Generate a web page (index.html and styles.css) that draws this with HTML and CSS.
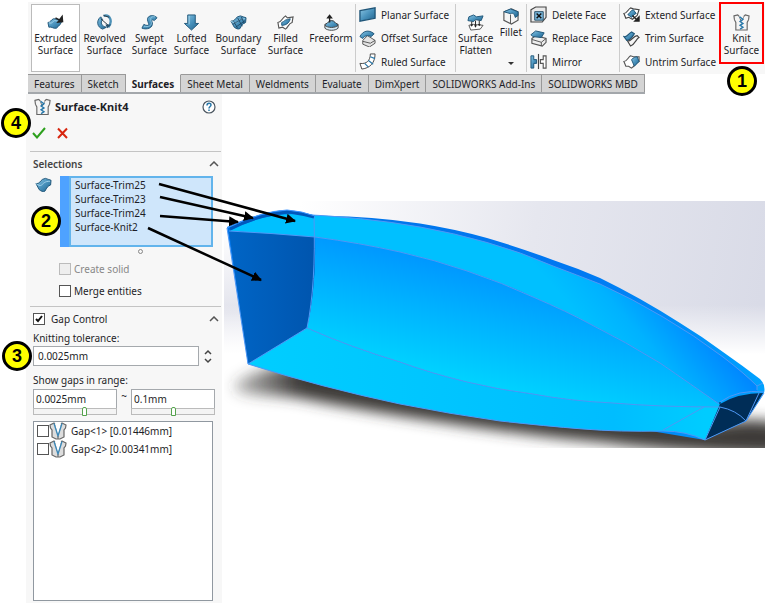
FILE: index.html
```html
<!DOCTYPE html>
<html lang="en">
<head>
<meta charset="utf-8">
<title>Surface-Knit4</title>
<link rel="stylesheet" href="styles.css">
</head>
<body>
<svg class="defs" aria-hidden="true">
  <defs>
    <linearGradient id="steel" x1="0" y1="0" x2="1" y2="1">
      <stop offset="0" stop-color="#8cc6e4"/><stop offset=".5" stop-color="#4a93bd"/><stop offset="1" stop-color="#20628c"/>
    </linearGradient>
    <symbol id="knit" viewBox="0 0 18 18">
      <path d="M1 2l4-1 2 2 1 3 1 1 1-1 1-3 2-2 4 1-.500 4-1.500 3v8H3V9L1.500 6z" fill="#f4f4f4" stroke="#666" stroke-width="1.200"/>
      <path d="M6.500 2.500L9 7l2.500-4.500z" fill="#f7f7f7"/>
      <path d="M7 3l3.500 2.500L7.500 8l3 2-3 2 3 2-3 2" fill="none" stroke="#2878aa" stroke-width="1.500"/>
    </symbol>
    <symbol id="gap" viewBox="0 0 18 18">
      <path d="M1 3l4-2 2 3 2 9 2-9 2-3 4 2-.500 3L15 8v7l-4 2H7l-4-2V8L1.500 6z" fill="#ddd" stroke="#666" stroke-width="1.200"/>
      <path d="M6 2l3 12 3-12z" fill="#fff"/><path d="M5 1.500L9 14l4-12.500" fill="none" stroke="#3c88b8" stroke-width="1.300"/>
      <path d="M9 14v3" stroke="#666"/>
    </symbol>
    <symbol id="sheet" viewBox="0 0 18 18">
      <path d="M1 7.500C5 8 5 5 8 3l3-1c2 1 4 1 6 2l-.500 5c-3 1-4 3-6 6.500-2 1-4 0-6-1.500z" fill="url(#steel)" stroke="#1f5578"/>
      <path d="M1 7.500c3 1.500 4 3 6 1.500s3-4 9-4" fill="none" stroke="#a6d5eb"/>
    </symbol>
  </defs>
</svg>

<div class="app">
  <header>
    <div class="ribbon" role="toolbar" aria-label="Surfaces">
      <div class="group create">
        <button class="big active">
          <svg viewBox="0 0 18 18"><path d="M1 9c3 0 3-3 6-4l9 1c-1 5-3 6-6 9-3 1-5-2-8-1z" fill="url(#steel)" stroke="#1f5578"/><path d="M2 9c3 2 4-1 6-2l7 1" fill="none" stroke="#a6d5eb"/><path d="M9 4l5 3M16 2.500L16.500 8l-5 .500z" stroke="#222" stroke-width="1.500" fill="#222"/></svg>
          <span>Extruded<br>Surface</span></button>
        <button class="big">
          <svg viewBox="0 0 18 18"><path d="M5 3C0 7 1 14 7 16l4-2C6 13 4 9 7 6z" fill="url(#steel)" stroke="#1f5578"/><path d="M8 2c7-2 10 6 5 12" fill="none" stroke="#4c91b7" stroke-width="2.500"/><path d="M5 5l8 7M8 1.500l6 2" stroke="#27333d"/><path d="M10 11l6 0-4 4z" fill="#27506c"/></svg>
          <span>Revolved<br>Surface</span></button>
        <button class="big">
          <svg viewBox="0 0 18 18"><path d="M8 3c4-3 8 0 9 1l-3 3c-3-2-3 0-2 2 1 6-6 8-11 6l2-4c4 2 6 1 5-1-1-3-2-5 0-7z" fill="url(#steel)" stroke="#1f5578"/><path d="M15 3c-6-1-5 3-4 6 0 4-3 5-8 4" fill="none" stroke="#8fc6df"/></svg>
          <span>Swept<br>Surface</span></button>
        <button class="big">
          <svg viewBox="0 0 18 18"><path d="M5 1h8v9h3.500L9 17l-7.500-7H5z" fill="url(#steel)" stroke="#1f5578"/><path d="M6.500 2v9" stroke="#a6d5eb"/></svg>
          <span>Lofted<br>Surface</span></button>
        <button class="big">
          <svg viewBox="0 0 18 18"><use href="#sheet"/><path d="M4 8l4 7M8 4l5 9M12 3l3 7M3 11l10-6M6 14l10-7" stroke="#173f5c" fill="none" stroke-width=".8"/></svg>
          <span>Boundary<br>Surface</span></button>
        <button class="big">
          <svg viewBox="0 0 18 18"><path d="M1 9c4 0 4-5 8-7l2 2 6-1-1 6c-4 1-4 5-7 7l-3-2-4 1z" fill="#fff" stroke="#555" stroke-width="1.200"/><path d="M5 9c3-1 3-3 6-3l3-1c-1 5-5 7-9 7z" fill="url(#steel)" stroke="#1f5578"/></svg>
          <span>Filled<br>Surface</span></button>
        <button class="big">
          <svg viewBox="0 0 18 18"><path d="M2 11c4-1 3-4 7-4s3 3 7 4c0 7-14 7-14 0z" fill="url(#steel)" stroke="#333"/><path d="M2 12c3 3 11 3 14 0v3c-3 3-11 3-14 0z" fill="#d6eaf4" stroke="#444"/><path d="M7 9V3M5 4l2-2.500L9 4z" stroke="#222" stroke-width="1.400" fill="#222"/></svg>
          <span>Freeform</span></button>
      </div>
      <div class="group list">
        <button class="row"><svg viewBox="0 0 18 18"><path d="M1 5l16-3v11L1 16z" fill="url(#steel)" stroke="#1f5578" stroke-width="1.400"/></svg>Planar Surface</button>
        <button class="row"><svg viewBox="0 0 18 18"><path d="M4 11l5-5 8 5v3l-6 4-7-3z" fill="#e4e4e4" stroke="#555"/><path d="M4 12l8 2 5-3" fill="none" stroke="#555"/><path d="M1 7c3-6 9-8 15-3l-3 3C9 5 6 6 4 9z" fill="url(#steel)" stroke="#1f5578"/></svg>Offset Surface</button>
        <button class="row"><svg viewBox="0 0 18 18"><path d="M12 1h5c0 9-5 15-14 16L1 11c7 1 11-3 11-10z" fill="#fff" stroke="#444"/><path d="M12 4l5 2M10 8l5 4M6 11l4 4" stroke="#2878aa" fill="none" stroke-width="1.300"/></svg>Ruled Surface</button>
      </div>
      <div class="group shape">
        <button class="big">
          <svg viewBox="0 0 18 18"><path d="M2 12l5-1 10 1-3 4-10 1z" fill="#fff" stroke="#555"/><path d="M2 3l5-2 3 2 7-1-2 5-6-1-2 2-6-1z" fill="url(#steel)" stroke="#1f5578"/><path d="M5 8v4m4-5v6m4-6v4" stroke="#222"/><path d="M3.500 11l1.500 2.500L6.500 11zM7.500 12L9 14.500l1.500-2.500zM11.500 10.500l1.500 2.500 1.500-2.500z" fill="#222"/></svg>
          <span>Surface<br>Flatten</span></button>
        <button class="big fillet">
          <svg viewBox="0 0 18 18"><path d="M2 4l8-3 7 3v9l-7 4-8-4z" fill="#f5f5f5" stroke="#555" stroke-width="1.200"/><path d="M2 4l7-3 8 3v4l-3 2c-1-4-2-5-5-4z" fill="url(#steel)" stroke="#1f5578"/><path d="M9 7v9" stroke="#555"/></svg>
          <span>Fillet</span><i class="caret"></i></button>
      </div>
      <div class="group list faces">
        <button class="row"><svg viewBox="0 0 18 18"><path d="M1 4l5-3h11v11l-4 5H1z" fill="#e9e9e9" stroke="#444" stroke-width="1.200"/><path d="M5 6h9v9H5z" fill="#7dbbe0" stroke="#234a63"/><path d="M7 8l5 5m0-5l-5 5" stroke="#111" stroke-width="1.600"/></svg>Delete Face</button>
        <button class="row"><svg viewBox="0 0 18 18"><path d="M2 9l4-3 11 3v4l-4 4-11-3z" fill="#eee" stroke="#555" stroke-width="1.200"/><path d="M2 10l10 3 5-4m-5 4v4" fill="none" stroke="#555"/><path d="M1 5l5-4 9 2-3 5-9-1z" fill="url(#steel)" stroke="#1f5578"/></svg>Replace Face</button>
        <button class="row"><svg viewBox="0 0 18 18"><path d="M1 3h3v4h3v4H4v5H1z" fill="url(#steel)" stroke="#1f5578"/><path d="M9 1v16" stroke="#444" stroke-width="1.200"/><path d="M17 3h-3v4h-3v4h3v5h3z" fill="#fff" stroke="#555" stroke-width="1.200"/></svg>Mirror</button>
      </div>
      <div class="group list edit">
        <button class="row"><svg viewBox="0 0 18 18"><path d="M1 8c3 0 4-4 7-6l3 1 6 1-2 6-5 4-4-2-3 1z" fill="#fff" stroke="#444" stroke-width="1.200"/><path d="M5 9c2 0 3-5 6-5l3 4c-2 0-3 3-5 4z" fill="url(#steel)" stroke="#1f5578"/><path d="M10 10l4 4m-1.500 2H17v-4.500z" fill="#222" stroke="#222" stroke-width="1.400"/></svg>Extend Surface</button>
        <button class="row"><svg viewBox="0 0 18 18"><path d="M1 7c4 1 4-3 8-5l3 2c-2 3-4 7-8 7z" fill="url(#steel)" stroke="#1f5578" stroke-width="1.200"/><path d="M5 12c4 0 6-6 10-6l2 2c-3 1-4 7-9 9z" fill="#f5f5f5" stroke="#444" stroke-width="1.200"/></svg>Trim Surface</button>
        <button class="row"><svg viewBox="0 0 18 18"><path d="M1 9c3 0 4-4 7-6l3 1 6 0v5c-4 1-4 5-8 7l-3-2-3 0z" fill="#fff" stroke="#555" stroke-width="1.200"/><path d="M9 7c2-2 4-3 6-3l2 5-5 5z" fill="url(#steel)" stroke="#1f5578"/></svg>Untrim Surface</button>
      </div>
      <button class="big knit"><svg viewBox="0 0 18 18"><use href="#knit"/></svg><span>Knit<br>Surface</span></button>
    </div>
    <nav class="tabs">
      <button>Features</button><button>Sketch</button><button class="current">Surfaces</button><button>Sheet Metal</button><button>Weldments</button><button>Evaluate</button><button>DimXpert</button><button>SOLIDWORKS Add-Ins</button><button>SOLIDWORKS MBD</button>
    </nav>
  </header>

  <main>
    <aside class="panel">
      <div class="title">
        <svg class="icon" viewBox="0 0 18 18"><use href="#knit"/></svg>
        <h1>Surface-Knit4</h1>
        <button class="help" aria-label="Help"><svg viewBox="0 0 14 14"><circle cx="7" cy="7" r="6" fill="#fff" stroke="#4b5660" stroke-width="1.200"/><path d="M5 5.500c0-3 4-3 4-.500C9 6.500 7 6.500 7 8.500M7 9.500V11" fill="none" stroke="#2878aa" stroke-width="1.500"/></svg></button>
      </div>
      <div class="confirm">
        <button aria-label="OK"><svg viewBox="0 0 14 12"><path d="M1 6l4 4.500L13 1" fill="none" stroke="#2da01d" stroke-width="2"/></svg></button>
        <button aria-label="Cancel"><svg viewBox="0 0 14 12"><path d="M2 1.500l9 9.500m0-9.500L2 11" fill="none" stroke="#d8260f" stroke-width="2"/></svg></button>
      </div>

      <section class="selections">
        <div class="head"><h2>Selections</h2><button class="fold" aria-label="Collapse Selections"><svg viewBox="0 0 10 6"><path d="M1 5l4-4 4 4" fill="none" stroke="#555" stroke-width="1.500"/></svg></button></div>
        <div class="pick">
          <svg class="icon" viewBox="0 0 18 18"><use href="#sheet"/></svg>
          <ul><li>Surface-Trim25</li><li>Surface-Trim23</li><li>Surface-Trim24</li><li>Surface-Knit2</li></ul>
        </div>
        <i class="grip"></i>
        <label class="check off"><input type="checkbox" disabled>Create solid</label>
        <label class="check"><input type="checkbox">Merge entities</label>
      </section>

      <section class="gaps">
        <div class="head"><label class="toggle"><input type="checkbox" checked>Gap Control</label><button class="fold" aria-label="Collapse Gap Control"><svg viewBox="0 0 10 6"><path d="M1 5l4-4 4 4" fill="none" stroke="#555" stroke-width="1.500"/></svg></button></div>
        <label class="caption" for="tol">Knitting tolerance:</label>
        <div class="tolerance">
          <input id="tol" type="text" value="0.0025mm">
          <div class="spin">
            <button aria-label="Increase"><svg viewBox="0 0 10 6"><path d="M2 5l3-3 3 3" fill="none" stroke="#444" stroke-width="1.500"/></svg></button>
            <button aria-label="Decrease"><svg viewBox="0 0 10 6"><path d="M2 1l3 3 3-3" fill="none" stroke="#444" stroke-width="1.500"/></svg></button>
          </div>
        </div>
        <label class="caption" for="low">Show gaps in range:</label>
        <div class="range">
          <div class="limit"><input id="low" type="text" value="0.0025mm"><input type="range" min="0" max="100" value="62" aria-label="Lower limit"></div>
          <span>~</span>
          <div class="limit"><input type="text" value="0.1mm" aria-label="Upper limit"><input type="range" min="0" max="100" value="50" aria-label="Upper limit slider"></div>
        </div>
        <div class="results">
          <label><input type="checkbox"><svg viewBox="0 0 18 18"><use href="#gap"/></svg><span>Gap&lt;1&gt; [0.01446mm]</span></label>
          <label><input type="checkbox"><svg viewBox="0 0 18 18"><use href="#gap"/></svg><span>Gap&lt;2&gt; [0.00341mm]</span></label>
        </div>
      </section>
    </aside>

    <svg class="view" viewBox="224 201 541 247" role="img" aria-label="Hull surface model">
      <defs>
        <linearGradient id="sky" x1="300" y1="200" x2="765" y2="280" gradientUnits="userSpaceOnUse"><stop offset="0" stop-color="#fff"/><stop offset=".5" stop-color="#e6e7ef"/><stop offset="1" stop-color="#d9dbe7"/></linearGradient>
        <linearGradient id="haze" x1="0" y1="0" x2="0" y2="1"><stop offset=".42" stop-color="#fff" stop-opacity="0"/><stop offset=".62" stop-color="#fff"/></linearGradient>
        <linearGradient id="mist" x1="0" y1="0" x2="0" y2="1"><stop offset="0" stop-color="#e2e3ec" stop-opacity="0"/><stop offset=".5" stop-color="#e2e3ec"/><stop offset="1" stop-color="#fff"/></linearGradient>
        <linearGradient id="side" x1="460" y1="245" x2="430" y2="372" gradientUnits="userSpaceOnUse"><stop offset="0" stop-color="#008cff"/><stop offset=".5" stop-color="#00b0ff"/><stop offset="1" stop-color="#00d2ff"/></linearGradient>
        <linearGradient id="deck" x1="600" y1="340" x2="664" y2="284" gradientUnits="userSpaceOnUse"><stop offset="0" stop-color="#00c0ff"/><stop offset=".4" stop-color="#00b2ff"/><stop offset="1" stop-color="#0088ff"/></linearGradient>
        <linearGradient id="keel" x1="248" y1="0" x2="705" y2="0" gradientUnits="userSpaceOnUse"><stop offset="0" stop-color="#00ceff"/><stop offset=".8" stop-color="#00bdff"/><stop offset="1" stop-color="#00ccff"/></linearGradient>
        <linearGradient id="rim" x1="300" y1="0" x2="765" y2="0" gradientUnits="userSpaceOnUse"><stop offset="0" stop-color="#0075ea"/><stop offset=".6" stop-color="#0078f2"/><stop offset="1" stop-color="#00a2ff"/></linearGradient>
        <linearGradient id="stern" x1="0" y1="0" x2="1" y2="0"><stop offset="0" stop-color="#0065c6"/><stop offset="1" stop-color="#0055ae"/></linearGradient>
        <linearGradient id="dusk" x1="232" y1="0" x2="300" y2="0" gradientUnits="userSpaceOnUse"><stop offset="0" stop-color="#3c3a38" stop-opacity=".3"/><stop offset="1" stop-color="#3c3a38"/></linearGradient>
        <filter id="soft" x="-10%" y="-30%" width="120%" height="160%"><feGaussianBlur stdDeviation="7"/></filter>
      </defs>
      <rect x="224" y="201" width="541" height="247" fill="url(#sky)"/>
      <rect x="224" y="230" width="60" height="165" fill="url(#mist)"/>
      <rect x="224" y="201" width="541" height="247" fill="url(#haze)"/>
      <path d="M236 382C290 350 340 372 420 380S620 414 700 425C730 424 745 414 790 426V455C730 454 660 450 610 443C500 433 370 412 300 398C265 393 225 398 236 382z" fill="url(#dusk)" filter="url(#soft)"/>
      <path d="M227 227Q262 211 287 210Q302 211 315 216Q365 215 420 223.500Q455 229 487 238Q521 248 553 260Q577 268 600 278Q641 298 680 323Q703 337 723 352Q743 366 760 379Q766 385 764 393L746 421L705 440L248 364z" fill="url(#rim)"/>
      <path d="M230 231Q260 214 294 214Q364 217 420 227Q454 233 487 242.500Q521 252 553 266Q577 275 600 284Q633 299 663 317Q694 335 723 357Q744 373 757 386L757 391Q738 392 720 404Q692 385 660 363Q626 342 590 324Q568 312 533 297Q503 283 467 271Q435 260 400 252Q360 243 315 237Z" fill="url(#deck)"/>
      <path d="M315 237Q360 243 400 252Q435 260 467 271Q503 283 533 297Q568 312 590 324Q626 342 660 363Q692 385 719 404L720 407Q660 407 613 403Q570 401 533 394Q500 390 467 382Q430 373 400 362Q350 347 307 328Q316 285 315 237z" fill="url(#side)"/>
      <path d="M248 364L307 328Q350 347 400 362Q430 373 467 382Q500 390 533 394Q570 401 613 403Q660 407 720 407L705 440Q686 431 663 431Q620 432 583 429Q545 426 500 421Q450 414 400 404Q320 387 248 364z" fill="url(#keel)"/>
      <path d="M229 231Q270 233 315 237Q316 290 307 328L248 364z" fill="url(#stern)"/>
      <path d="M720 404Q738 393 763 393L746 421L705 440z" fill="#002d57"/>
      <g fill="none" stroke="#4f98f5" stroke-width="1">
        <path d="M229 231Q270 233 315 237Q360 243 400 252Q435 260 467 271Q503 283 533 297Q568 312 590 324Q626 342 660 363Q692 385 719 404M314 216Q316 285 307 328L248 364"/>
        <path d="M307 328Q350 347 400 362Q430 373 467 382Q500 390 533 394Q570 401 613 403Q660 407 720 407Q736 410 746 421M663 430L704 407"/>
        <path d="M294 214Q364 217 420 227Q454 233 487 242.500Q521 252 553 266Q577 275 600 284Q633 299 663 317Q694 335 723 357Q744 373 757 386"/>
        <path d="M227 228L248 364Q320 387 400 404Q450 414 500 421Q545 426 583 429Q620 432 663 431Q686 431 705 440L746 421L764 393M705 440L720 407M720 402Q738 389 764 392M763 383L757 386L757 390M759 393L746 421"/>
      </g>
      <path d="M230 229Q260 214 289 212Q303 214 314 217" fill="none" stroke="#0058bc" stroke-width="3"/>
      <path d="M227 228Q262 211 287 210Q302 211 315 216" fill="none" stroke="#3d95ff"/>
      <circle cx="720" cy="403" r="1" fill="#064c80"/>
    </svg>
  </main>

  <svg class="arrows" viewBox="0 0 160 110" aria-hidden="true">
    <defs><marker id="tip" markerUnits="userSpaceOnUse" markerWidth="10" markerHeight="10" refX="9" refY="5" orient="auto"><path d="M0 0l10 5-10 5z"/></marker></defs>
    <g stroke="#000" stroke-width="2.500">
      <path marker-end="url(#tip)" d="M19 14L155 51"/><path marker-end="url(#tip)" d="M20 27L113 48"/><path marker-end="url(#tip)" d="M20 46L98 52"/><path marker-end="url(#tip)" d="M8 58L121 110"/>
    </g>
  </svg>
  <b class="callout one">1</b><b class="callout two">2</b><b class="callout three">3</b><b class="callout four">4</b>
</div>
</body>
</html>
```
FILE: styles.css
```css
* { box-sizing: border-box; }

body {
  margin: 0;
  background: #fff;
  color: #1e1e28;
  font: 10px/14px "Noto Sans", "Open Sans", sans-serif;
}

button, input {
  font: inherit;
  color: inherit;
}

button {
  padding: 0;
  border: 0;
  background: none;
}

h1, h2, ul {
  margin: 0;
  padding: 0;
  font-size: inherit;
  list-style: none;
}

svg { display: block; flex: none; }

.defs { position: absolute; width: 0; height: 0; }

.app { position: relative; min-height: 100vh; }

header { padding: 2px 0 0 28px; }

/* Ribbon */
.ribbon {
  display: flex;
  height: 72px;
  background: #f7f7f7;
  line-height: 12px;
}

.group { display: flex; margin: 2px 0; border-right: 1px solid #ccc; }

.create {
  display: grid;
  grid-template-columns: 49px 49px 41px 43px 51px 43px 48px;
  padding-left: 3px;
}

.big {
  display: flex;
  flex-direction: column;
  align-items: center;
  gap: 1px;
  padding-top: 10px;
  white-space: nowrap;
}

.big svg, .row svg { width: 17px; height: 17px; }

.active { padding-top: 9px; border: 1px solid #bbb; background: #fff; }

.list {
  flex-direction: column;
  justify-content: space-between;
  width: 100px;
  padding: 2px 3px;
}

.row { display: flex; align-items: center; gap: 5px; white-space: nowrap; }

.shape { width: 71px; justify-content: space-between; padding: 0 4px 0 2px; }
.fillet { padding-top: 4px; }
.faces, .edit { width: 93px; }
.edit { width: 99px; border: 0; }

.caret {
  margin-top: auto;
  margin-bottom: 7px;
  border: 3px solid transparent;
  border-top-color: #333;
  border-bottom: 0;
}

.knit {
  width: 45px;
  height: 62px;
  padding-top: 10px;
  border: 2px solid #f00;
}

/* Tabs */
.tabs { display: flex; width: max-content; border-bottom: 2px solid #a3a7ab; }

.tabs button {
  height: 18px;
  padding: 0 6px;
  border: solid #999;
  border-width: 1px 1px 0 0;
  background: #d4d4d4;
  line-height: 16px;
}

.tabs .current { border-top-color: #f7f7f7; background: #f7f7f7; font-weight: bold; }

/* Property panel */
main {
  display: grid;
  grid-template-columns: 196px 1fr;
  gap: 2px;
  align-items: start;
  padding-left: 26px;
}

.panel { min-height: 509px; background: #f7f7f7; }

.title { display: flex; align-items: center; gap: 4px; padding: 4px 6px 0 8px; }
.title h1 { flex: 1; font-size: 11px; }
.icon { width: 17px; height: 18px; }
.help svg { width: 14px; height: 14px; }

.confirm { display: flex; gap: 10px; padding: 11px 6px 12px; }
.confirm svg { width: 14px; height: 12px; }

section { margin: 0 1px 0 4px; border-top: 1px solid #c4c4c4; }

.head { display: flex; justify-content: space-between; align-items: center; padding: 5px 2px 5px 3px; }
.head h2 { color: #444; font-weight: 600; }
.fold svg { width: 10px; height: 6px; }

.pick { display: flex; align-items: flex-start; gap: 8px; margin: 0 8px 0 5px; }
.pick ul {
  flex: 1;
  height: 71px;
  margin-left: 9px;
  padding: 0 4px;
  border: 2px solid #62b4ec;
  background: #cfe6fb;
  box-shadow: -9px 0 #4ea2ff;
}

.grip {
  display: block;
  width: 5px;
  height: 5px;
  margin: 2px 78px 8px auto;
  border: 1px solid #888;
  border-radius: 50%;
}

input[type="checkbox"] {
  appearance: none;
  flex: none;
  width: 12px;
  height: 12px;
  margin: 0;
  border: 1px solid #555;
  background: #fff;
}

input[type="checkbox"]:checked {
  background: #fff url("data:image/svg+xml,%3Csvg xmlns='http://www.w3.org/2000/svg' viewBox='0 0 10 10'%3E%3Cpath d='M2 5l2 2 4-5' fill='none' stroke='%23111' stroke-width='2'/%3E%3C/svg%3E");
}

.check { display: flex; align-items: center; gap: 3px; padding: 0 0 8px 29px; }
.off { color: #888; }
.off input { border-color: #bbb; background: #eee; }

.toggle { display: flex; align-items: center; gap: 6px; }

.caption { display: block; padding-left: 3px; }

.tolerance { display: flex; gap: 4px; padding: 1px 8px 7px 3px; }

input[type="text"] {
  width: 100%;
  height: 20px;
  padding: 0 4px;
  border: 1px solid #a5a9ad;
  background: #fff;
}

.spin { display: flex; flex-direction: column; justify-content: center; gap: 3px; }
.spin svg { width: 10px; height: 6px; }

.range { display: grid; grid-template-columns: 84px 14px 84px; padding: 2px 0 6px 3px; }
.range span { text-align: center; }
.range input[type="text"] { padding: 0 2px; }
.limit { display: grid; }

input[type="range"] {
  appearance: none;
  width: 100%;
  height: 7px;
  margin: -1px 0 0;
  border: 1px solid #bbb;
  background: #f4f4f4;
}

input[type="range"]::-webkit-slider-thumb {
  appearance: none;
  width: 5px;
  height: 9px;
  border: 1px solid #55a34d;
  border-radius: 2px 2px 0 0;
  background: #fff;
}

.results {
  height: 180px;
  margin: 0 8px 0 3px;
  padding: 0 3px;
  border: 1px solid #9098a0;
  background: #fff;
}

.results label { display: flex; align-items: center; height: 18px; }
.results svg { width: 18px; height: 18px; margin-right: 4px; }

/* Model view */
.view { width: 100%; height: auto; margin-top: 107px; }

/* Annotations */
.arrows { position: absolute; left: 140px; top: 170px; width: 160px; height: 110px; overflow: visible; }

.callout {
  position: absolute;
  display: grid;
  place-items: center;
  width: 30px;
  height: 30px;
  border: 3px solid #000;
  border-radius: 50%;
  background: #ff0;
  color: #000;
  font: bold 18px/18px "Liberation Sans", sans-serif;
}

.one { left: 727px; top: 66px; }
.two { left: 31px; top: 206px; }
.three { left: 2px; top: 341px; }
.four { left: 1px; top: 108px; }
```
